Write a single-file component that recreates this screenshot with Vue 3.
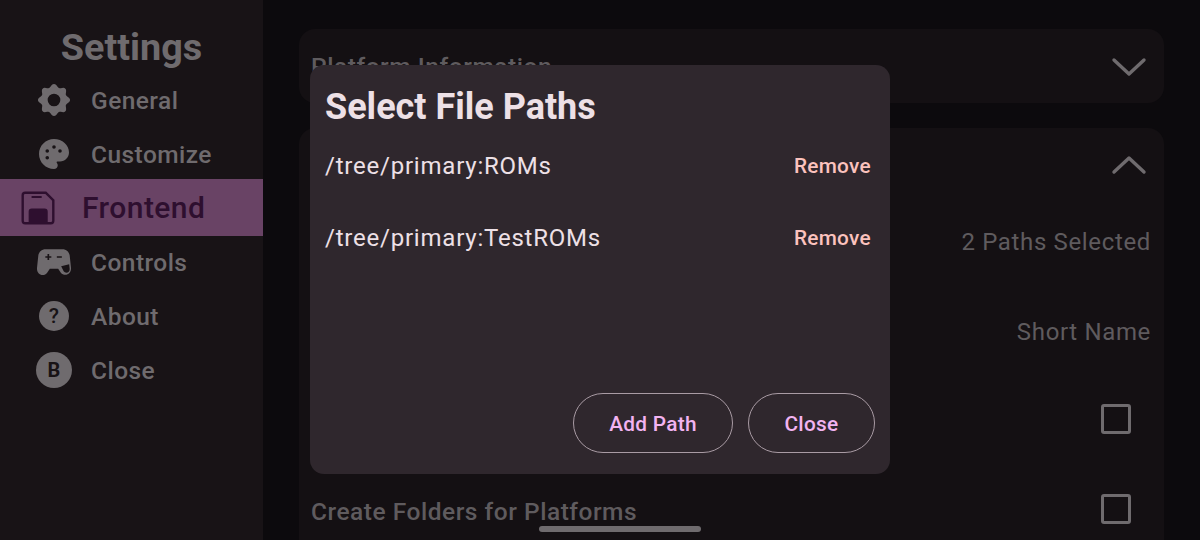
<template>
  <div class="page">
    <aside class="sidebar">
      <h1 class="sidebar__title">Settings</h1>
      <nav class="sidebar__menu">
        <a v-for="item in menu" :key="item.label" class="sidebar__item" :class="{ 'sidebar__item--active': item.active }">
          <span class="sidebar__icon">
            <span v-if="item.badge" class="sidebar__badge" :class="{ 'sidebar__badge--small': item.small }">{{ item.badge }}</span>
            <svg v-else class="sidebar__svg" :width="item.size" :height="item.size" viewBox="0 0 24 24" fill="currentColor">
              <path fill-rule="evenodd" :d="item.icon" />
            </svg>
          </span>
          <span>{{ item.label }}</span>
        </a>
      </nav>
    </aside>

    <main class="content">
      <section class="card card--collapsed">
        <h2 class="card__title">Platform Information</h2>
        <svg class="chevron" width="36" height="22" viewBox="0 0 36 22" fill="none">
          <path d="M3 5L18 19L33 5" stroke="currentColor" stroke-width="3.4" stroke-linecap="round" stroke-linejoin="round" />
        </svg>
      </section>

      <section class="card card--open">
        <div class="card__head">
          <svg class="chevron" width="36" height="22" viewBox="0 0 36 22" fill="none">
            <path d="M3 18L18 4L33 18" stroke="currentColor" stroke-width="3.4" stroke-linecap="round" stroke-linejoin="round" />
          </svg>
        </div>
        <div class="row row--paths"><span class="row__value">2 Paths Selected</span></div>
        <div class="row row--name"><span class="row__value">Short Name</span></div>
        <div class="row row--check"><span class="check"></span></div>
        <div class="row row--check row--split"><span class="row__label">Create Folders for Platforms</span><span class="check"></span></div>
      </section>
    </main>

    <div class="dialog">
      <h2 class="dialog__title">Select File Paths</h2>
      <div class="dialog__list">
        <div v-for="path in paths" :key="path" class="dialog__row">
          <span>{{ path }}</span>
          <a class="dialog__remove">Remove</a>
        </div>
      </div>
      <div class="dialog__actions">
        <button class="dialog__btn dialog__btn--add">Add Path</button>
        <button class="dialog__btn dialog__btn--close">Close</button>
      </div>
    </div>

    <div class="home-bar"></div>
  </div>
</template>

<script setup>
// scalloped cog: eight soft lobes round a round hole
const gearPath = () => {
  const points = []
  for (let i = 0; i < 96; i++) {
    const a = (i / 96) * Math.PI * 2
    const r = 8.7 + 0.95 * Math.cos(a * 8)
    points.push(`${(12 + r * Math.cos(a)).toFixed(2)} ${(12 + r * Math.sin(a)).toFixed(2)}`)
  }
  return `M${points.join('L')}zM12 8.2a3.8 3.8 0 1 0 0 7.6a3.8 3.8 0 1 0 0-7.6z`
}

const menu = [
  { label: 'General', size: 40, icon: gearPath() },
  {
    label: 'Customize',
    size: 36,
    icon: 'M12 2C6.49 2 2 6.49 2 12s4.49 10 10 10c1.38 0 2.5-1.12 2.5-2.5 0-.61-.23-1.2-.64-1.67-.08-.1-.13-.21-.13-.33 0-.28.22-.5.5-.5H16c3.31 0 6-2.69 6-6 0-4.96-4.49-9-10-9zM12 6.100a1.200 1.200 0 1 0 0 2.400a1.200 1.200 0 1 0 0-2.400zM7.500 8.800a1.200 1.200 0 1 0 0 2.400a1.200 1.200 0 1 0 0-2.400zM16 8.800a1.200 1.200 0 1 0 0 2.400a1.200 1.200 0 1 0 0-2.400zM7.500 13.300a1.200 1.200 0 1 0 0 2.400a1.200 1.200 0 1 0 0-2.400z',
  },
  {
    label: 'Frontend',
    active: true,
    size: 44,
    icon: 'M5 3h11.5L21 7.5V19a2 2 0 0 1-2 2H5a2 2 0 0 1-2-2V5a2 2 0 0 1 2-2zm0 1.3a.7.7 0 0 0-.7.7v14c0 .39.31.7.7.7h1.9V14a1.7 1.7 0 0 1 1.7-1.7h7a1.7 1.7 0 0 1 1.7 1.7v5.7H19a.7.7 0 0 0 .7-.7V8l-3.7-3.7H5zM8.5 5.5h5.5v1.1H8.5z',
  },
  {
    label: 'Controls',
    size: 40,
    icon: 'M7 4.3h10c2.4 0 4 1.5 4.4 3.7l.8 7.5c.2 2.3-1.3 4.2-3.4 4.2-1.1 0-2-.5-2.7-1.3L14.5 16H9.5l-1.6 2.4c-.7.9-1.6 1.4-2.7 1.4-2.1 0-3.6-1.9-3.4-4.2L2.6 8C3 5.8 4.6 4.3 7 4.3zM8.1 7.2v1.3H6.8v1h1.3v1.3h1V9.5h1.3v-1H9.1V7.200zM13.700 8.500v1h3v-1zM16.300 14.500l4.800-1.200.3 2.800c.1 1.300-.8 2.300-1.900 2.300-.7 0-1.300-.3-1.700-.8z',
  },
  { label: 'About', badge: '?', small: true },
  { label: 'Close', badge: 'B' },
]

const paths = ['/tree/primary:ROMs', '/tree/primary:TestROMs']
</script>

<style>
html,
body {
  margin: 0;
  background: #0c0a0d;
}
</style>

<style scoped>
.page {
  position: relative;
  display: flex;
  width: 1200px;
  height: 540px;
  overflow: hidden;
  background: #0c0a0d;
  font-family: Roboto, 'Liberation Sans', sans-serif;
}

.sidebar {
  width: 263px;
  flex-shrink: 0;
  background: #181316;
  color: #6f6b6e;
}

.sidebar__title {
  margin: 0;
  padding: 24px 0 3px;
  font-size: 37.8px;
  line-height: 46px;
  font-weight: 700;
  text-align: center;
}

.sidebar__menu {
  display: flex;
  flex-direction: column;
}

.sidebar__item {
  display: flex;
  align-items: center;
  height: 54px;
  padding-left: 36px;
  gap: 19px;
  font-size: 24.5px;
  font-weight: 500;
  letter-spacing: 0.45px;
}

.sidebar__item--active {
  height: 57px;
  margin: -2px 0 -1px;
  padding-left: 20px;
  gap: 26px;
  background: #694365;
  color: #2e0f2f;
  font-size: 30px;
}

.sidebar__icon {
  display: flex;
  align-items: center;
  justify-content: center;
  width: 36px;
}

.sidebar__svg {
  flex-shrink: 0;
}

.sidebar__badge {
  display: flex;
  align-items: center;
  justify-content: center;
  flex-shrink: 0;
  width: 36px;
  height: 36px;
  border-radius: 50%;
  background: #6f6b6e;
  color: #181316;
  font-size: 20px;
  font-weight: 700;
}

.sidebar__badge--small {
  width: 30px;
  height: 30px;
  font-size: 21px;
  font-weight: 500;
}

.content {
  flex: 1;
  padding: 29px 36px 0;
  display: flex;
  flex-direction: column;
  gap: 25px;
  min-width: 0;
}

.card {
  flex: none;
  background: #141013;
  border-radius: 16px;
  color: #5f5b5e;
}

.card--collapsed {
  display: flex;
  align-items: center;
  justify-content: space-between;
  height: 74px;
  padding: 0 17px 0 12px;
}

.card--open {
  height: 460px;
  padding: 0 13px 0 12px;
}

.card__title {
  margin: 0;
  font-size: 24.5px;
  font-weight: 500;
  letter-spacing: 0.55px;
}

.card__head {
  display: flex;
  align-items: center;
  justify-content: flex-end;
  height: 74px;
  padding-right: 4px;
}

.chevron {
  color: #6f6b6e;
}

.row {
  display: flex;
  align-items: center;
  justify-content: flex-end;
  font-size: 24px;
  letter-spacing: 0.65px;
}

.row--split {
  justify-content: space-between;
}

.row--paths {
  height: 80px;
}

.row--name {
  box-sizing: border-box;
  height: 92px;
  padding-top: 8px;
}

.row--check {
  height: 90px;
}

.row__value {
  color: #5f5b5e;
}

.row__label {
  margin-top: 4px;
  font-size: 24.5px;
  font-weight: 500;
  letter-spacing: 0.52px;
}

.check {
  width: 24px;
  height: 24px;
  margin-right: 20px;
  border: 3px solid #6f6b6e;
  border-radius: 3px;
}

.dialog {
  position: absolute;
  left: 310px;
  top: 65px;
  display: flex;
  flex-direction: column;
  box-sizing: border-box;
  width: 580px;
  height: 409px;
  padding: 22px 15px 21px;
  background: #2f272d;
  border-radius: 14px;
  color: #ede0e6;
}

.dialog__title {
  margin: 0;
  font-size: 36px;
  line-height: 40px;
  font-weight: 700;
}

.dialog__list {
  flex: 1;
  display: flex;
  flex-direction: column;
  gap: 32px;
  padding-top: 19px;
}

.dialog__row {
  display: flex;
  align-items: center;
  justify-content: space-between;
  height: 40px;
  padding-right: 4px;
  font-size: 24px;
  letter-spacing: 0.78px;
}

.dialog__remove {
  color: #fbc2bd;
  font-size: 20.8px;
  font-weight: 500;
  letter-spacing: 0.3px;
}

.dialog__actions {
  display: flex;
  justify-content: flex-end;
  gap: 15px;
}

.dialog__btn {
  height: 60px;
  box-sizing: border-box;
  padding-top: 2px;
  background: none;
  border: 1.5px solid #a99ba4;
  border-radius: 30px;
  color: #f2b3f1;
  font-family: inherit;
  font-size: 20.8px;
  font-weight: 500;
  letter-spacing: 0.3px;
}

.dialog__btn--add {
  width: 160px;
}

.dialog__btn--close {
  width: 127px;
}

.home-bar {
  position: absolute;
  left: 539px;
  top: 526px;
  width: 162px;
  height: 6px;
  border-radius: 3px;
  background: #6f6b6e;
}
</style>
